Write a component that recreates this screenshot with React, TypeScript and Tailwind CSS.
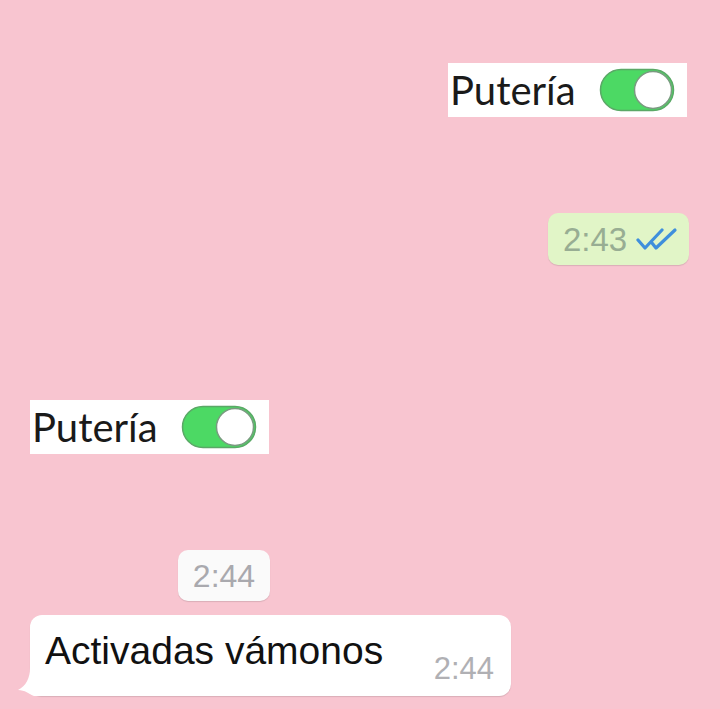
import React from "react";

const Toggle = () => (
  <svg width="76" height="44" viewBox="0 0 76 44">
    <rect x="1.5" y="1.5" width="73" height="41" rx="20.5" fill="#4cd964" stroke="#5aa866" strokeWidth="1.5" />
    <circle cx="54" cy="22" r="18.5" fill="#ffffff" stroke="#7a9a80" strokeWidth="1.5" />
  </svg>
);

const Sticker = () => (
  <div className="flex h-[54px] w-[239px] items-center bg-white pl-[2px]">
    <span className="text-[40px] leading-none text-[#1a1a1a]" style={{ fontFamily: "Lato, 'Open Sans', sans-serif" }}>
      Putería
    </span>
    <span className="ml-auto mr-[12px] flex">
      <Toggle />
    </span>
  </div>
);

const Ticks = () => (
  <svg width="42" height="24" viewBox="0 0 42 24" fill="none" stroke="#3f8fdc" strokeWidth="3.2" strokeLinecap="round" strokeLinejoin="round">
    <path d="M2 13 L9 21 L26 3" />
    <path d="M16 16 L20 21 L39 3" />
  </svg>
);

export default function App() {
  const sans = { fontFamily: "'Liberation Sans', Arial, sans-serif" };
  return (
    <div className="flex h-[709px] w-[720px] flex-col overflow-hidden bg-[#f8c5d0]" style={sans}>
      <div className="mt-[63px] flex justify-end pr-[33px]">
        <Sticker />
      </div>

      <div className="mt-[96px] flex justify-end pr-[31px]">
        <div className="flex h-[52px] w-[141px] items-center gap-[9px] rounded-[10px] bg-[#e1f5c7] pl-[15px] shadow-[0_1px_1px_rgba(0,0,0,0.12)]">
          <span className="text-[33px] leading-none text-[#98ad93]">2:43</span>
          <Ticks />
        </div>
      </div>

      <div className="mt-[135px] flex pl-[30px]">
        <Sticker />
      </div>

      <div className="mt-[96px] flex pl-[178px]">
        <div className="flex h-[51px] w-[92px] items-center justify-center rounded-[10px] bg-[#fafafa] shadow-[0_1px_1px_rgba(0,0,0,0.12)]">
          <span className="text-[32px] leading-none text-[#a9a9ae]">2:44</span>
        </div>
      </div>

      <div className="mt-[14px] flex pl-[30px]">
        <div className="relative h-[81px] w-[481px] rounded-[12px] bg-white shadow-[0_1px_1px_rgba(0,0,0,0.12)]">
          <svg className="absolute left-[-12px] bottom-[0px]" width="24" height="28" viewBox="0 0 24 28">
            <path d="M24 0 L24 28 L16 28 C11 26 7 22 0 22 C8 18 12 10 12 0 Z" fill="#ffffff" />
          </svg>
          <span className="absolute left-[15px] top-[16px] text-[39px] leading-none text-[#111111]">Activadas vámonos</span>
          <span className="absolute right-[17px] top-[38px] text-[31px] leading-none text-[#b0b0b4]">2:44</span>
        </div>
      </div>
    </div>
  );
}
